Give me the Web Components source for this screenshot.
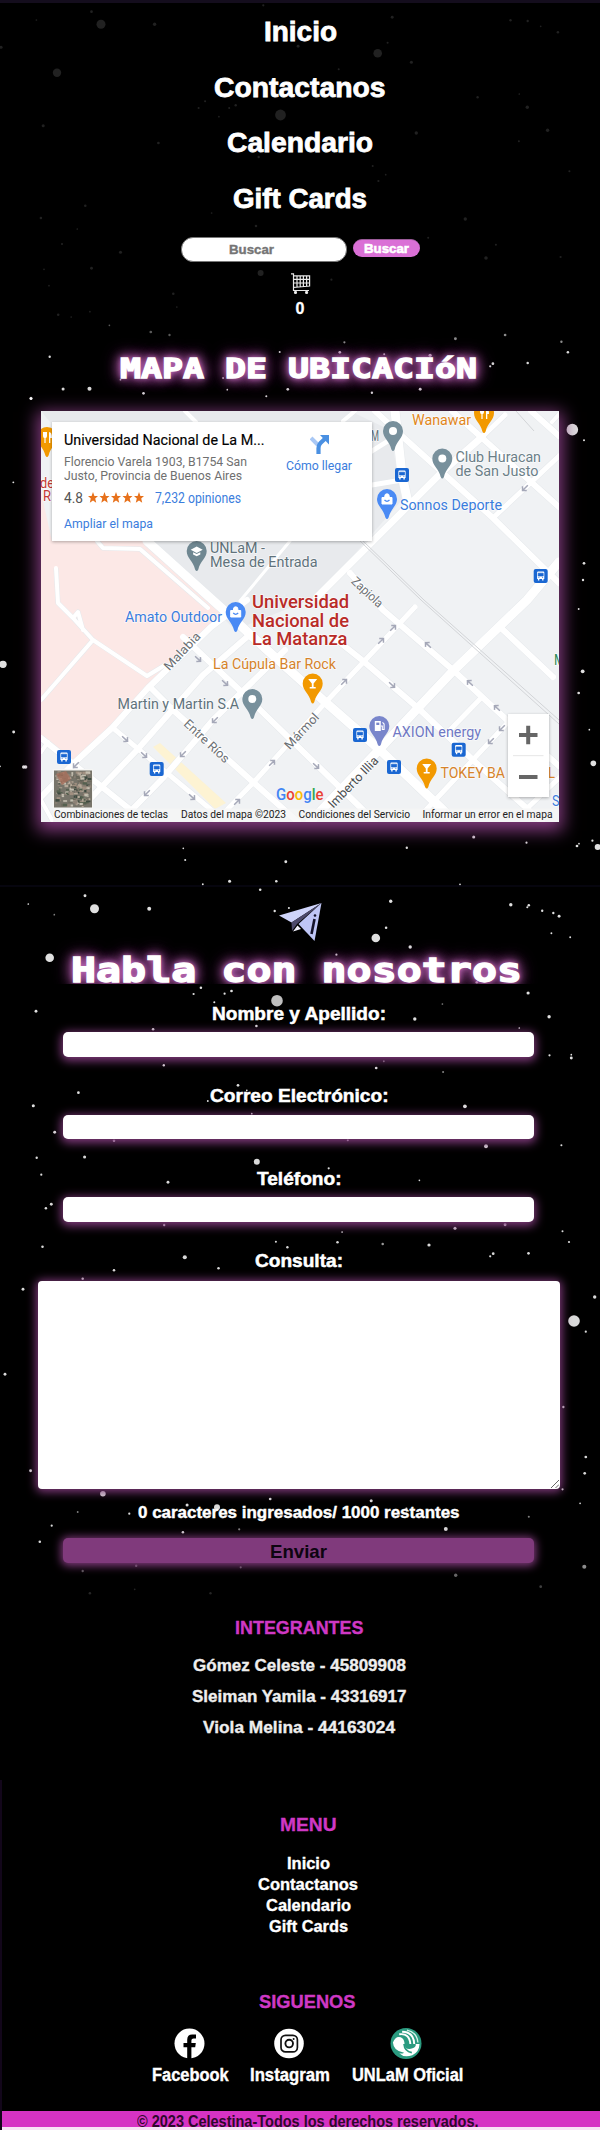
<!DOCTYPE html>
<html lang="es">
<head>
<meta charset="utf-8">
<title>Celestina - Contactanos</title>
<style>
html,body{margin:0;padding:0;background:#000}
body{width:600px;height:2130px;overflow:hidden}
</style>
</head>
<body>
<contact-page></contact-page>
<script>
const shadow=(el,html)=>{const t=document.createElement('template');t.innerHTML=html;el.attachShadow({mode:'open'}).appendChild(t.content.cloneNode(true));return el.shadowRoot;};

/* One line of text stretched to the width given in w. */
class FitText extends HTMLElement{
  connectedCallback(){
    if(this.shadowRoot)return;
    const r=shadow(this,`<style>:host{display:inline-block;white-space:nowrap;text-align:left;vertical-align:top}span{display:inline-block;transform-origin:0 50%}</style><span><slot></slot></span>`);
    const s=r.querySelector('span'),w=+this.getAttribute('w');
    const n=s.getBoundingClientRect().width;
    this.style.width=w+'px';
    if(n)s.style.transform=`scaleX(${w/n})`;
  }
}
customElements.define('fit-text',FitText);

class StarField extends HTMLElement{
  connectedCallback(){
    const k=2.6133,out=[];
    const add=(list,oy,sy,o)=>list.forEach(([x,y,r,op])=>out.push(`<circle cx="${(x/k).toFixed(1)}" cy="${(oy+y/sy).toFixed(1)}" r="${(r||1)>2.5?r:(r||1)*.85}" opacity="${op||o}"/>`));
    add([[264,73,4.5],[987,160,4.3],[149,218,4.2],[733,345,5.4],[239,35,1.6],[404,73,2],[1025,52,1.7],[1334,61,1.4],[1379,63,1.4],[1458,97,1.5],[1413,79,1],[1075,187,1.8],[1013,128,1.2],[779,139,1.7],[885,208,1.2],[1248,292,1.4],[1378,322,2],[1357,282,1],[616,316,1.4],[599,324,1.2],[519,324,1.2],[536,304,1.2],[572,350,1],[113,377,1.8],[414,429,1.6],[1088,399,2],[1431,391,2],[1356,424,1.2],[676,471,1.4],[974,498,1.2],[1008,524,1],[989,543,1.3],[1488,514,1.2],[223,617,1.5],[107,654,1.5],[553,639,1],[202,687,1],[669,678,1.5],[1216,657,2],[162,732,1.3],[315,757,1.8],[1296,734,1.2],[1119,713,1.2],[1270,774,2.1],[1465,771,1.3],[239,805,1.7],[115,808,1],[681,819,3],[866,839,1.3],[128,857,1],[453,881,1.5],[462,921,1],[152,944,1.5],[186,951,1],[235,935,1],[3,142,1.8],[95,60,1],[688,16,1.3]],0,3,.13);
    add([[394,996,1.6],[443,1005,1.4],[286,976,1]],0,3,.35);
    add([[1190,1016,1.7],[1320,1005,1.6],[900,1027,1.3],[1467,1025,1.4]],0,3,.55);
    add([[130,1070,1.4],[888,1057,1.6],[1124,1066,1.9],[1004,1063,1.2],[1288,1091,1.6],[1281,1099,1.3],[1379,1089,1.5],[1484,1057,1.5],[165,1167,1.8],[234,1166,2.4],[375,1180,1.6],[752,1168,1.6],[1098,1168,1.7],[81,1195,1.8],[594,1169,1],[972,1178,1.4],[696,1189,1.2],[583,1134,1.1],[731,1056,1.2],[315,1139,1]],0,3,.85);
    add([[1238,51,1.8],[1376,68,1.3],[1063,83,1.4],[1508,78,1.6],[1513,71,1],[1548,62,1.3],[1562,81,3],[479,85,1],[484,120,1.2],[747,125,1.7],[530,193,1.1],[600,184,1.8],[722,184,1.5],[1202,193,1],[680,209,1.5],[222,227,1.7],[247,266,4.5],[390,266,2.3],[74,252,1],[142,284,1,.5],[1021,244,2],[1335,254,2],[1382,256,1.5],[1378,262,1.2],[1417,272,1.4],[1446,279,1.4],[1461,289,1.7],[982,354,4.3],[1009,323,1.5],[1072,381,2],[1441,340,1.1],[1490,352,1.1],[130,413,4.3],[879,404,1.3],[718,273,1.4],[755,264,1.2],[525,503,1.5],[605,513,1.6],[587,521,1.3],[506,522,1.3],[724,542,5.8,.75],[560,547,1.2],[1380,519,1.9],[94,574,1.7],[1156,552,1,.5],[1084,597,2],[1435,590,2],[670,618,1.5],[400,628,1.5],[1357,624,1],[428,736,1.4],[983,744,1.6],[1003,724,1.1,.5],[1158,756,1.2,.5],[1436,706,1.3],[1493,714,1.7],[1493,704,1],[622,796,1.6],[205,818,1.6],[645,811,1],[87,857,1.8],[1215,859,2.2],[543,843,1.1],[658,881,1],[143,937,1.7],[1246,487,1.5]],820,3,.88);
    add([[96,83,1.4],[221,81,1.8],[298,32,1.5],[671,95,3],[909,31,1.2],[1270,49,2.3],[1467,46,1.2],[108,134,1.3],[439,157,1.7],[859,115,1.3],[1096,151,1],[134,223,1.7],[120,235,1.5],[429,285,1.4],[1189,295,1.8],[1320,284,1.7],[894,306,1],[882,337,1.5],[721,335,1.2],[751,352,1.4],[1000,342,1.5,.6],[1121,345,1.9],[1470,304,1.2],[1487,336,1.3],[1381,370,1.6],[1289,371,1.6],[1281,379,1.3],[111,350,1.5],[483,382,2.4],[571,415,1.5],[298,421,1.5],[216,446,1.5],[60,478,1.7],[1554,501,2],[1500,573,5.8],[1531,605,1.3],[13,733,1.7],[1472,831,1.4],[1531,981,1.6],[1528,1030,1.6],[80,1022,1.7],[269,1091,2.8],[1470,1078,1.3],[706,1107,1.6],[489,1125,1.8],[567,1132,3],[970,1112,1.8],[338,1151,1.3],[203,1146,1.1,.5],[135,1187,1.3],[104,1235,1.5],[478,1207,1.5],[625,1198,1.3,.5],[1165,1197,2.3],[1382,1160,1.2,.5],[1516,1120,1],[1062,1136,1.3],[1527,1310,2.4,.55],[356,1307,1.4,.4],[629,1312,1.3,.4],[216,1323,1.4,.35],[1191,1336,2,.4],[235,1390,1.5,.15],[352,1378,1,.15],[550,1390,1.4,.15],[1413,1370,1.6,.25]],1130,3,.85);
    const m=(a,ox)=>a.forEach(([x,y,r])=>out.push(`<circle cx="${ox+x/3}" cy="${380+y/3}" r="${r>2.5?r:r*.85}" opacity=".88"/>`));
    m([[93,56,1.5],[40,307,1.1],[9,853,3.7],[41,1056,1.7],[71,1161,2],[77,1161,2],[0,1159,1]],0);
    m([[187,79,2],[97,149,5.8],[132,181,1.2],[132,550,1.6],[129,600,1.4],[116,687,1.1],[128,874,2.2],[116,939,1.6],[148,1049,1],[160,1150,2.8]],540);
    shadow(this,`<style>:host{display:block;position:absolute;inset:0}svg{display:block}</style><svg width="600" height="2130" fill="#fff"><rect width="600" height="3" fill="#140d1d"/><rect y="885.5" width="600" height="1" fill="#0c0a1c"/><rect y="1780" width="2" height="350" fill="#12061a"/>${out.join('')}</svg>`);
  }
}
customElements.define('star-field',StarField);

class SiteHeader extends HTMLElement{
  connectedCallback(){
    shadow(this,`<style>
    :host{display:flex;flex-direction:column;align-items:center;color:#fff;font-weight:700;padding-top:4.4px}
    nav{display:flex;flex-direction:column;align-items:center;font-size:27.5px;line-height:55.5px;-webkit-text-stroke:.8px #fff}
    form{display:flex;gap:6px;align-items:flex-start;margin:10.9px 0 0 0;height:25px;font-size:13.5px}
    .q{box-sizing:border-box;width:166px;height:24.7px;border:1.5px solid #777;border-radius:12px;background:#fff;color:#757575;padding-left:47px;line-height:23.5px;-webkit-text-stroke:.4px}
    .b{box-sizing:border-box;width:67px;height:18.3px;margin-top:1.7px;border-radius:9px;background:#da70d6;border-top:1px solid #9a5a98;text-align:center;line-height:18px;-webkit-text-stroke:.6px}
    svg{margin:10.7px 0 0 1px}
    .n{font-size:16px;line-height:18px;margin-top:5.8px;height:18px;-webkit-text-stroke:.3px}
    </style>
    <nav><fit-text w="73">Inicio</fit-text><fit-text w="171.5">Contactanos</fit-text><fit-text w="146">Calendario</fit-text><fit-text w="134">Gift Cards</fit-text></nav>
    <form><div class="q"><fit-text w="45">Buscar</fit-text></div><div class="b"><fit-text w="45">Buscar</fit-text></div></form>
    <svg width="20" height="21" viewBox="0 0 20 21" fill="none" stroke="#e8e8e8" stroke-width="1.2"><path d="M0 .8H2.5V17.5H18M2.5 2.8H18.6V13L2.5 14.3M6 3V14M9.2 3V13.8M12.4 3V13.5M15.6 3V13.3M2.5 6.3H18.6M2.5 10H18.6"/><circle cx="4.5" cy="19.4" r="1" fill="#fff"/><circle cx="15.6" cy="19.4" r="1" fill="#fff"/></svg>
    <div class="n">0</div>`);
  }
}
customElements.define('site-header',SiteHeader);

class NeonTitle extends HTMLElement{
  connectedCallback(){
    shadow(this,`<style>:host{display:block;text-align:center;font-family:"DejaVu Sans Mono",monospace;font-weight:700;color:#fff;-webkit-text-stroke:1.3px #fff;text-shadow:0 0 5px #c070ba,0 0 8px #b05caa,0 0 11px #a852a2,0 0 15px #8d4188,0 0 18px #6d2e69}</style><slot></slot>`);
  }
}
customElements.define('neon-title',NeonTitle);

class LocationMap extends HTMLElement{
  connectedCallback(){
    const pin=(x,y,c,g)=>`<g transform="translate(${x} ${y})"><path d="M0 -10A10 10 0 0 1 10 0C10 7 3.5 10 1.6 18.5Q0 21.5-1.6 18.5C-3.5 10-10 7-10 0A10 10 0 0 1 0-10Z" fill="${c}"/>${g}</g>`;
    const dot='<circle r="4" fill="#fff"/>',
      bag='<path d="M-5-1.5H5V5H-5ZM-2.2-1.5V-3A2.2 2.2 0 0 1 2.2-3V-1.5" fill="#fff" stroke="#fff" stroke-width="1"/><path d="M-2.5 1Q0 3.6 2.5 1" stroke="#4a8af4" fill="none" stroke-width="1.2"/>',
      cup='<path d="M-4.5-4.5H4.5L.9 0V3.6H3V5H-3V3.6H-.9V0Z" fill="#fff"/>',
      fork='<path d="M-4-5V-1Q-4 1-2.6 1V6H-1.4V1Q0 1 0-1V-5M2 6V-5Q5-5 5 1H3.3V6Z" fill="#fff"/>',
      cap='<path d="M-6-1.2L0-4.4L6-1.2L0 2ZM-3.6 1.2V3.6L0 5.2L3.6 3.6V1.2L0 3Z" fill="#fff"/>',
      gas='<path d="M-4.5-5H1.5V5H-4.5Z" fill="#fff"/><path d="M-3-3.4H0V-1H-3Z" fill="#7986cb"/><path d="M1.5 0H3V3.5H4.8V-2L3.2-3.6" stroke="#fff" fill="none" stroke-width="1.1"/>';
    const bus=(x,y)=>`<g transform="translate(${x} ${y})"><rect x="-7" y="-7" width="14" height="14" rx="2" fill="#1a67d2"/><path d="M-3.6-3.6Q-3.6-4.6-2.6-4.6H2.6Q3.6-4.6 3.6-3.6V3H2.8V4.5H1.4V3H-1.4V4.5H-2.8V3H-3.6Z" fill="#fff"/><path d="M-2.5-2.8H2.5V0H-2.5ZM-2.4 1.4h1.1M1.3 1.4H2.4" fill="#1a67d2" stroke="#1a67d2" stroke-width=".7"/></g>`;
    const t=(s,x,y,x2,c,f=14,w=400)=>`<text x="${x}" y="${y}" textLength="${x2-x}" lengthAdjust="spacingAndGlyphs" fill="${c}" font-size="${f}" font-weight="${w}">${s}</text>`;
    const rt=(s,x,y,a,w,c='#6b6f73')=>`<text transform="translate(${x} ${y}) rotate(${a})" x="${-w/2}" y="4.5" textLength="${w}" lengthAdjust="spacingAndGlyphs" font-size="12.5" fill="${c}">${s}</text>`;
    const arr=(x,y,a)=>`<path transform="translate(${x} ${y}) rotate(${a})" d="M-4 0H3.5M.5-3L3.5 0L.5 3"/>`;
    const roads=[['M147 541L227 613L267 650L323 700L380 750L440 807L455 822',9],['M375 411L403 437L493 518L559 583',6],['M531 411L559 436',6],['M452 411L559 507',6],['M482 437L442 472L367 547L317 597',7],['M505 415L482 437',5],['M559 456L493 518',5],['M247 600L211 627L148 688L112 728L73 764L41 797',6],['M559 562L527 600L452 672L418 708L377 752L310 822',9],['M415 607L325 703L253 783L215 822',5],['M247 637L203 675L137 750L68 822',6],['M285 650L213 720L163 778L120 822',6],['M183 637L247 697L360 807L375 822',6],['M150 687L173 710L253 782L298 822',6],['M113 728L215 813',5],['M41 738L127 807L143 822',6],['M333 637L362 660L418 708L473 760L542 822',6],['M350 573L383 610L453 670L507 720L559 766',6],['M500 627L553 677',6],['M482 697L450 730',5],['M513 717L425 811',5],['M559 778L520 815',5],['M395 411L402 475L408 503',9],['M372 485L402 480',5],['M372 451L396 436',5],['M343 421L355 411M185 411L196 422M562 411L552 422',4],['M290 541L240 601',3],['M41 800L52 820M41 752L48 742',4],
      ['M56 568L58 603L73 618L93 640L147 676L165 665M93 640L41 700M73 618L78 612L83 630M97 541L103 548L140 549L208 608',4]];
    const d=roads.map(([p,w])=>`<path d="${p}" stroke-width="${w}"/>`).join('');
    const d2=roads.map(([p,w])=>`<path d="${p}" stroke-width="${w+1}"/>`).join('');
    let sat='',seed=7;const rnd=()=>(seed=(seed*16807)%2147483647)/2147483647,cs=['#8d8276','#55604f','#b5a898','#6e6a5e','#3e4a40','#a08f80','#c4beb0'];
    for(let i=0;i<190;i++)sat+=`<rect x="${(55+rnd()*33).toFixed(1)}" y="${(771+rnd()*34).toFixed(1)}" width="${(1.5+rnd()*3).toFixed(1)}" height="${(1+rnd()*2).toFixed(1)}" fill="${cs[i%7]}"/>`;
    shadow(this,`<style>
    :host{display:block;position:relative;width:518px;height:411px;box-shadow:0 5px 16px 4px #803a7c;font-family:Roboto,sans-serif}
    svg{display:block}
    .card{position:absolute;left:10.5px;top:11px;width:320.5px;height:119px;box-sizing:border-box;background:#fff;box-shadow:0 1px 3px rgba(0,0,0,.3);display:flex;padding:8.7px 0 0 12.5px;color:#707070;font-size:13px}
    .info{display:flex;flex-direction:column;width:222px}
    .t{font-size:14.5px;line-height:20px;color:#000;margin-bottom:4.4px;-webkit-text-stroke:.15px}
    .a{line-height:14.3px}
    .r{display:flex;align-items:center;height:16px;line-height:16px;font-size:14px;margin:6.2px 0 10.2px;color:#555}
    .l{color:#3b7ddd;line-height:16px}
    .s{margin:0 11px 0 5px}
    .go{display:flex;flex-direction:column;color:#3b7ddd;line-height:16px;padding-top:4.5px}
    .go svg{margin:0 0 4px 24px}
    .z{position:absolute;left:467px;top:303px;width:40.5px;height:83.5px;background:#fff;box-shadow:0 1px 3px rgba(0,0,0,.3)}
    </style>
    <svg width="518" height="411" viewBox="41 411 518 411">
      <rect x="41" y="411" width="518" height="411" fill="#f0f2f4"/>
      <path d="M41 411H350L390 430L402 500L317 597L235 630L147 541Z" fill="#e8eaed"/>
      <path d="M41 492L52 541H148L224 613L211 627L148 688L112 728L73 764L41 738Z" fill="#fce8e6"/>
      <path d="M153 747L160 743L226 803L215 809Z" fill="#fdf3d3"/>
      <g fill="none" stroke="#e6e9ec" stroke-linejoin="round">${d2}</g>
      <g fill="none" stroke="#fff" stroke-linejoin="round" stroke-linecap="round">${d}</g>
      <path d="M360 541L421 600L559 724M363 541L424 600L559 720M516 411L534 431" stroke="#d2d4d7" fill="none"/>
      <g stroke="#a5a8b8" stroke-width="1.5" fill="none">${[[198,659,43],[225,683,43],[215,720,135],[125,739,43],[144,755,43],[183,754,135],[192,797,43],[147,793,135],[237,802,-45],[272,763,-45],[344,682,-45],[381,641,-45],[393,628,-45],[392,685,43],[428,645,223],[470,683,223],[497,708,223],[502,728,135],[491,741,135],[316,766,43],[525,488,135],[76,765,135]].map(a=>arr(...a)).join('')}</g>
      ${pin(47,437,'#f29900',fork)}${pin(196.7,551,'#6f8791',cap)}${pin(235.7,612,'#4a8af4',bag)}${pin(393,431,'#78909c',dot)}${pin(484,413,'#f29900',fork)}${pin(442.3,458.5,'#78909c',dot)}${pin(387,499,'#4a8af4',bag)}${pin(252.3,699,'#78909c',dot)}${pin(312.7,683.5,'#f29900',cup)}${pin(379.3,726,'#7986cb',gas)}${pin(426.7,768.5,'#f29900',cup)}
      ${[[402,475],[540.7,576],[64,757],[156.7,769],[360,735],[394,767],[458.7,749.7]].map(a=>bus(...a)).join('')}
      <g stroke="#fff" stroke-width="1.5" stroke-opacity=".7" paint-order="stroke" stroke-linejoin="round">
      ${t('Wanawar',412,424.7,471,'#e0861a')}${t('M',371,440.7,379,'#5f6f78')}${t('Club Huracan',455.5,462,541,'#6b7f88')}${t('de San Justo',455.5,475.7,538.5,'#6b7f88')}${t('Sonnos Deporte',400,510,502,'#3b7ddd')}
      ${t('UNLaM -',210,552.7,265,'#60727b')}${t('Mesa de Entrada',210,567,317.5,'#60727b')}${t('Amato Outdoor',125,621.7,222,'#3b7ddd')}
      ${t('Universidad',252,607.7,349,'#b92b27',18,500)}${t('Nacional de',252,626.5,349,'#b92b27',18,500)}${t('La Matanza',252,645,347.5,'#b92b27',18,500)}
      ${t('La Cúpula Bar Rock',213,669,336,'#d6832a')}${t('Martin y Martin S.A',117.5,709,239,'#60727b')}${t('AXION energy',392.5,736.5,481,'#6f78c4')}${t('TOKEY BA',440.5,778,505,'#d6832a')}${t('L',548,778,555,'#d6832a')}${t('S',552,806,559.5,'#3b7ddd')}${t('M',554,665,565,'#2e8b57')}${t('de',40,487.5,54,'#c53935')}${t('R',43,501,51,'#c53935')}
      ${rt('Zapiola',367.5,592,43,38)}${rt('Malabia',182,651,-47,47)}${rt('Entre Ríos',207,741,43,57)}${rt('Mármol',301.5,731,-47,44)}${rt('Imberto Illia',353,782,-46,66,'#4a4d50')}
      </g>
      <text x="276" y="800" textLength="47.5" lengthAdjust="spacingAndGlyphs" font-size="16" font-weight="500"><tspan fill="#4285f4">G</tspan><tspan fill="#ea4335">o</tspan><tspan fill="#fbbc05">o</tspan><tspan fill="#4285f4">g</tspan><tspan fill="#34a853">l</tspan><tspan fill="#ea4335">e</tspan></text>
      <rect x="53" y="808.5" width="506" height="13.5" fill="#f5f5f5" opacity=".75"/>
      ${t('Combinaciones de teclas',54,817.7,168,'#222',10)}${t('Datos del mapa ©2023',181,817.7,286,'#222',10)}${t('Condiciones del Servicio',298.5,817.7,410,'#222',10)}${t('Informar un error en el mapa',422.5,817.7,552.5,'#222',10)}
      <rect x="52.5" y="769" width="40.5" height="39.5" rx="1" fill="#f6f6f4"/><rect x="54" y="770.5" width="38" height="37" fill="#77746a"/>${sat}<path d="M56 774L66 771L71 779L62 785Z" fill="#a9705c" opacity=".8"/>
    </svg>
    <div class="card"><div class="info">
      <div class="t"><fit-text w="200.5">Universidad Nacional de La M...</fit-text></div>
      <div class="a"><fit-text w="183">Florencio Varela 1903, B1754 San</fit-text></div>
      <div class="a"><fit-text w="178">Justo, Provincia de Buenos Aires</fit-text></div>
      <div class="r"><fit-text w="19">4.8</fit-text><svg class="s" width="56" height="11" viewBox="0 0 56 11" fill="#e7711b">${[0,1,2,3,4].map(i=>`<path transform="translate(${i*11.5} 0)" d="M5 0L6.4 3.9L10 4L7.2 6.6L8.2 10.8L5 8.4L1.8 10.8L2.8 6.6L0 4L3.6 3.9Z"/>`).join('')}</svg><fit-text class="l" w="86">7,232 opiniones</fit-text></div>
      <div class="l"><fit-text w="89">Ampliar el mapa</fit-text></div></div>
      <div class="go"><svg width="19" height="19" viewBox="0 0 19 19"><path d="M1 3L8 10" stroke="#a9c8f5" stroke-width="4"/><path d="M8.5 19V13Q8.5 10 10.5 8L15 3.8" fill="none" stroke="#4a90e2" stroke-width="4.2"/><path d="M10 0H19V9.5Z" fill="#4a90e2"/></svg><fit-text w="66">Cómo llegar</fit-text></div>
    </div>
    <div class="z"><svg width="40.5" height="83.5"><path d="M11 21H29.5M20.2 11.7V30.3M11 63H29.5" stroke="#666" stroke-width="4"/><path d="M5 41.7H35.5" stroke="#e6e6e6"/></svg></div>`);
  }
}
customElements.define('location-map',LocationMap);

class FormField extends HTMLElement{
  connectedCallback(){
    shadow(this,`<style>:host{display:block;height:82.4px;width:471px;text-align:center;color:#fff;font-size:18.6px;line-height:22px}
    .l{height:22px;-webkit-text-stroke:.5px}.i{height:24.5px;margin-top:7.4px;border-radius:5px;background:#fff;box-shadow:0 2px 10px 2px #803a7c}</style>
    <div class="l"><slot></slot></div><div class="i"></div>`);
  }
}
customElements.define('form-field',FormField);

class ContactForm extends HTMLElement{
  connectedCallback(){
    shadow(this,`<style>:host{display:flex;flex-direction:column;align-items:center;width:597.5px;font-weight:700;color:#fff}
    .plane{margin:17px 0 11.7px 3px}
    neon-title{font-size:33px;line-height:36px;height:36px;margin:0 0 14px -4px;padding:0 40px;clip-path:inset(-30px -20px 5px -20px)}
    .l{font-size:18.6px;line-height:22px;height:22px;-webkit-text-stroke:.5px}
    .ta{position:relative;width:521.5px;height:208.4px;margin-top:8.5px;border-radius:4px;background:#fff;box-shadow:0 1px 10px 2px #803a7c}
    .ta svg{position:absolute;right:1px;bottom:1px}
    .c{font-size:16px;line-height:20px;height:20px;margin:14px 0 15px;-webkit-text-stroke:.4px}
    .b{width:471px;height:25px;border-radius:5px;background:#803a7c;color:#0d0410;box-shadow:0 1px 9px 2px #803a7c;text-align:center;font-size:19px;line-height:27px}</style>
    <svg class="plane" width="43" height="38" viewBox="0 0 43 38"><path d="M42.5 0L0 12.5L12.5 19.5Z" fill="#cfd4fa"/><path d="M42.5 0L12.5 19.5L13 28L18 21Z" fill="#4d4a6b"/><path d="M42.5 0L19.5 21L35.5 38Z" fill="#bfc6f6"/><path d="M14 28.5L18.5 22.5L22 26Z" fill="#f4f4ff"/><path d="M35.5 16L32.5 31" stroke="#14122a" stroke-width="2.6"/><circle cx="36" cy="12.5" r="1.3" fill="#14122a"/></svg>
    <neon-title><fit-text w="451">Habla con nosotros</fit-text></neon-title>
    <form-field><fit-text w="174">Nombre y Apellido:</fit-text></form-field>
    <form-field><fit-text w="178.5">Correo Electrónico:</fit-text></form-field>
    <form-field><fit-text w="84.5">Teléfono:</fit-text></form-field>
    <div class="l"><fit-text w="88">Consulta:</fit-text></div>
    <div class="ta"><svg width="8" height="8" stroke="#555" stroke-width=".9"><path d="M0 8L8 0M4.5 8L8 4.5"/></svg></div>
    <div class="c"><fit-text w="321.5">0 caracteres ingresados/ 1000 restantes</fit-text></div>
    <div class="b"><fit-text w="57">Enviar</fit-text></div>`);
  }
}
customElements.define('contact-form',ContactForm);

class SiteFooter extends HTMLElement{
  connectedCallback(){
    shadow(this,`<style>:host{display:flex;flex-direction:column;align-items:center;font-weight:700;color:#fff;margin-top:54.2px}
    h3{margin:0;font-size:19px;line-height:22px;height:22px;color:#cf38c4;text-align:center}
    section{display:flex;flex-direction:column;align-items:center;-webkit-text-stroke:.35px}
    .p{font-size:17px;line-height:31.3px;margin-top:10.6px;display:flex;flex-direction:column;align-items:center;color:#eee}
    .w{margin-left:-2px}.m{margin:70.6px 0 0 16px}.m .i{display:flex;flex-direction:column;align-items:center;font-size:17px;line-height:21px;margin-top:16.6px}
    .s{margin:53.8px 0 0 15px}.row{display:flex;gap:21.5px;margin-top:15.6px;font-size:17.5px;line-height:20px}
    .row>div{display:flex;flex-direction:column;align-items:center;gap:6px}.row svg{display:block;height:31px;margin-left:-2px}
    .bar{box-sizing:border-box;align-self:stretch;margin:26px 0 0 2px;height:16px;background:#d633c4;color:#30082c;text-align:center;font-size:16px;line-height:22px;overflow:hidden;padding-left:14px}
    .e{align-self:stretch;margin-left:2px;height:2.5px;background:#f8e3f6}</style>
    <section class="w"><h3><fit-text w="128.5">INTEGRANTES</fit-text></h3>
      <div class="p"><fit-text w="213">Gómez Celeste - 45809908</fit-text><fit-text w="214.5">Sleiman Yamila - 43316917</fit-text><fit-text w="192">Viola Melina - 44163024</fit-text></div></section>
    <section class="m"><h3><fit-text w="56.5">MENU</fit-text></h3>
      <div class="i"><fit-text w="43">Inicio</fit-text><fit-text w="100">Contactanos</fit-text><fit-text w="85">Calendario</fit-text><fit-text w="79">Gift Cards</fit-text></div></section>
    <section class="s"><h3><fit-text w="96.5">SIGUENOS</fit-text></h3>
      <div class="row">
        <div><svg width="31" viewBox="0 0 31 31"><circle cx="15.5" cy="15.5" r="15" fill="#fff"/><path d="M13.2 31V19.2H9.5V15H13.2V11.8Q13.2 6.6 18.2 6.6H22V10.5H19.5Q17.4 10.5 17.4 12.5V15H21.8L21.2 19.2H17.4V31Z" fill="#000"/></svg><fit-text w="76.6">Facebook</fit-text></div>
        <div><svg width="30" viewBox="0 0 30 31" fill="none" stroke="#111"><circle cx="15" cy="15.5" r="14.8" fill="#fff" stroke="none"/><rect x="7" y="7.3" width="16.4" height="16.6" rx="4.5" stroke-width="1.7"/><circle cx="15.2" cy="15.6" r="3.8" stroke-width="1.9"/><circle cx="19.6" cy="11" r="1" fill="#111" stroke="none"/></svg><fit-text w="80">Instagram</fit-text></div>
        <div><svg width="32" viewBox="0 0 32 32"><circle cx="16" cy="16" r="16" fill="#2b9b80"/><path d="M2.5 15Q5 8 10.5 9.5Q14.5 11 14.5 17Q15 22.5 21 21.5Q27 20 26 16.5H30Q29.5 25 22.5 28Q14 31 9 26Q12 27 14 25.5Q3 24 2.5 15Z" fill="#fff"/><path d="M9 6.5Q19.5 5 20.5 16.5M12 3.8Q24 4 24.5 16.5" stroke="#fff" stroke-width="2" fill="none"/><path d="M14 16.5Q14.5 24 22 25.5" stroke="#2b9b80" stroke-width="1.8" fill="none"/><path d="M17 2.2Q27.5 4.5 28.3 15" stroke="#d5f3ea" stroke-width="1.4" fill="none"/></svg><fit-text w="111.4">UNLaM Oficial</fit-text></div>
      </div></section>
    <div class="bar"><fit-text w="341.5">© 2023 Celestina-Todos los derechos reservados.</fit-text></div><div class="e"></div>`);
  }
}
customElements.define('site-footer',SiteFooter);

class ContactPage extends HTMLElement{
  connectedCallback(){
    shadow(this,`<style>:host{display:block;position:relative;width:600px;height:2130px;overflow:hidden;background:#000;font-family:"Liberation Sans",Arial,sans-serif}
    main{position:relative;display:flex;flex-direction:column}
    .h{font-size:26.5px;line-height:30px;height:30px;margin:36.5px 3px 26.6px 0}
    location-map{margin:0 0 64.5px 41px}</style>
    <star-field></star-field>
    <main><site-header></site-header><neon-title class="h"><fit-text w="357">MAPA DE UBICACIóN</fit-text></neon-title><location-map></location-map><contact-form></contact-form><site-footer></site-footer></main>`);
  }
}
customElements.define('contact-page',ContactPage);
</script>
</body>
</html>
